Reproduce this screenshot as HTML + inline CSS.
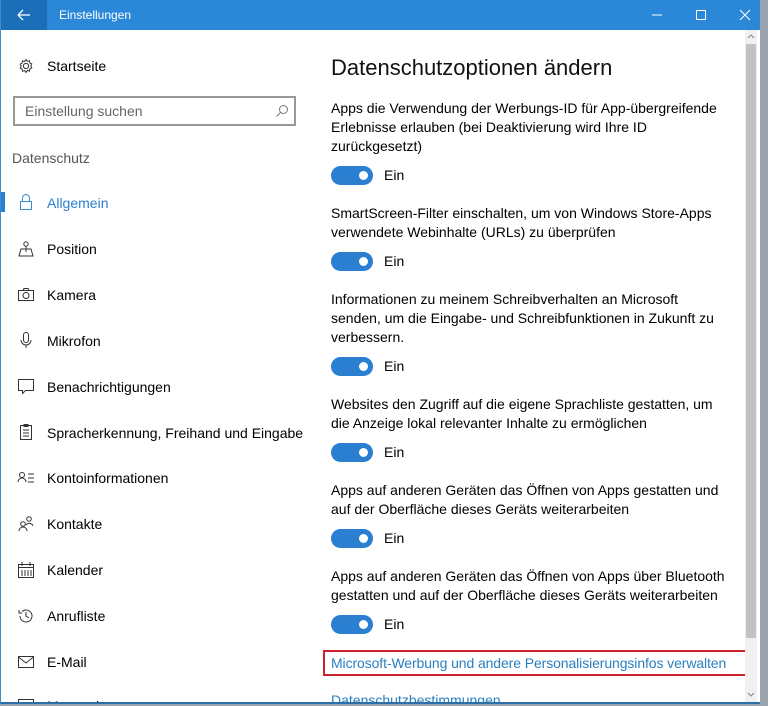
<!DOCTYPE html>
<html><head><meta charset="utf-8"><style>
*{margin:0;padding:0;box-sizing:border-box}
body{width:768px;height:706px;overflow:hidden;background:#9aa3ad;font-family:"Liberation Sans",sans-serif;position:relative}
#win{position:absolute;left:0;top:0;width:760px;height:704px;background:#fff;border-left:1px solid #3a8ed0;border-bottom:2px solid #2b6fa8;overflow:hidden}
#title{position:absolute;left:0;top:0;width:760px;height:30px;background:#2b88d8;color:#fff;font-size:12px}
#back{position:absolute;left:0;top:0;width:46px;height:30px;background:#1a6fb8}
.t{position:absolute;white-space:nowrap;font-size:14px;color:#000}
.p{position:absolute;left:330px;font-size:14px;color:#000;white-space:nowrap}
.tg{position:absolute;left:330px;width:42px;height:19px;border-radius:10px;background:#2a7fd0}
.tg::after{content:"";position:absolute;right:5px;top:5px;width:9px;height:9px;border-radius:50%;background:#fff}
.ein{position:absolute;left:383px;font-size:14px}
.ic{position:absolute;left:16px}
</style></head><body>
<div id="win">
<div id="title"><div id="back"><svg width="46" height="30"><path d="M17 15h12M17 15l5-5M17 15l5 5" stroke="#fff" stroke-width="1.3" fill="none"/></svg></div>
<span style="position:absolute;left:58px;top:8px">Einstellungen</span>
<svg style="position:absolute;left:640px;top:0" width="120" height="30"><path d="M11 15h10" stroke="#fff"/><rect x="55.5" y="10.5" width="9" height="9" stroke="#fff" fill="none"/><path d="M99 10l10 10M109 10l-10 10" stroke="#fff"/></svg>
</div>
<svg class="ic" style="top:57px" width="18" height="18" viewBox="0 0 18 18"><circle cx="9" cy="9" r="2.6" fill="none" stroke="#333"/><path d="M9 2.5l1.3 1.8 2.2-.6.3 2.2 2 1-1 2 1 2-2 1-.3 2.2-2.2-.6L9 15.5l-1.3-1.8-2.2.6-.3-2.2-2-1 1-2-1-2 2-1 .3-2.2 2.2.6z" fill="none" stroke="#333" stroke-width="1"/></svg>
<div class="t" style="left:46px;top:58px">Startseite</div>
<div style="position:absolute;left:12px;top:96px;width:283px;height:30px;border:2px solid #999"></div>
<div class="t" style="left:24px;top:103px;color:#666">Einstellung suchen</div>
<svg style="position:absolute;left:274px;top:104px" width="14" height="14"><circle cx="8.5" cy="5.5" r="4" fill="none" stroke="#777"/><path d="M5.5 8.5L1.5 12.5" stroke="#777"/></svg>
<div class="t" style="left:11px;top:150px;color:#555">Datenschutz</div>
<div style="position:absolute;left:0;top:192px;width:4px;height:20px;background:#2a7fd0"></div>
<svg class="ic" style="top:193px" width="18" height="18"><rect x="3.5" y="8.5" width="11" height="8" fill="none" stroke="#3a8ed0"/><path d="M5.5 8.5V5a3.5 3.5 0 0 1 7 0v3.5" fill="none" stroke="#3a8ed0"/></svg>
<div class="t" style="left:46px;top:195px;color:#2a7fd0">Allgemein</div>
<svg class="ic" style="top:240px" width="18" height="18"><circle cx="9" cy="4" r="2.2" fill="none" stroke="#333"/><path d="M9 6v6M4 9h10l2 7H2z" fill="none" stroke="#333"/></svg>
<div class="t" style="left:46px;top:241px">Position</div>
<svg class="ic" style="top:286px" width="18" height="18"><rect x="1.5" y="4.5" width="15" height="10" fill="none" stroke="#333"/><circle cx="9" cy="9.5" r="3" fill="none" stroke="#333"/><path d="M6 4.5l1-2h4l1 2" fill="none" stroke="#333"/></svg>
<div class="t" style="left:46px;top:287px">Kamera</div>
<svg class="ic" style="top:331px" width="18" height="18"><rect x="6.5" y="1.5" width="5" height="10" rx="2.5" fill="none" stroke="#333"/><path d="M4 9a5 5 0 0 0 10 0M9 14v3" fill="none" stroke="#333"/></svg>
<div class="t" style="left:46px;top:333px">Mikrofon</div>
<svg class="ic" style="top:377px" width="18" height="18"><path d="M1.5 2.5h15v11h-8l-3 3v-3h-4z" fill="none" stroke="#333"/></svg>
<div class="t" style="left:46px;top:379px">Benachrichtigungen</div>
<svg class="ic" style="top:423px" width="18" height="18"><rect x="3.5" y="2.5" width="11" height="14" fill="none" stroke="#333"/><path d="M7 1.5h4v2H7zM6 7h6M6 10h6M6 13h6" stroke="#333" fill="none"/></svg>
<div class="t" style="left:46px;top:425px">Spracherkennung, Freihand und Eingabe</div>
<svg class="ic" style="top:469px" width="18" height="18"><circle cx="5" cy="6" r="2.5" fill="none" stroke="#333"/><path d="M1 13a4 4 0 0 1 8 0M11 5h6M11 9h6M11 13h6" fill="none" stroke="#333"/></svg>
<div class="t" style="left:46px;top:470px">Kontoinformationen</div>
<svg class="ic" style="top:515px" width="18" height="18"><circle cx="6" cy="9" r="2.3" fill="none" stroke="#333"/><path d="M2 16a4 4 0 0 1 8 0" fill="none" stroke="#333"/><circle cx="12" cy="4" r="2.3" fill="none" stroke="#333"/><path d="M9 10a4 4 0 0 1 7 1" fill="none" stroke="#333"/></svg>
<div class="t" style="left:46px;top:516px">Kontakte</div>
<svg class="ic" style="top:561px" width="18" height="18"><rect x="1.5" y="3.5" width="15" height="13" fill="none" stroke="#333"/><path d="M1.5 6.5h15M5 1v4M13 1v4M5 9v6M8 9v6M11 9v6M14 9v6" stroke="#333"/></svg>
<div class="t" style="left:46px;top:562px">Kalender</div>
<svg class="ic" style="top:607px" width="18" height="18"><path d="M3 9a6 6 0 1 0 2-4.5M2 3v3h3M9 5v4l3 2" fill="none" stroke="#333"/></svg>
<div class="t" style="left:46px;top:608px">Anrufliste</div>
<svg class="ic" style="top:653px" width="18" height="18"><rect x="1.5" y="3.5" width="15" height="11" fill="none" stroke="#333"/><path d="M1.5 4l7.5 6 7.5-6" fill="none" stroke="#333"/></svg>
<div class="t" style="left:46px;top:654px">E-Mail</div>
<svg class="ic" style="top:698px" width="18" height="18"><rect x="1.5" y="1.5" width="15" height="11" fill="none" stroke="#333"/></svg>
<div class="t" style="left:46px;top:698px">Messaging</div>

<div class="t" style="left:330px;top:55px;font-size:22px;color:#111">Datenschutzoptionen ändern</div>
<div class="p" style="top:100px">Apps die Verwendung der Werbungs-ID für App-übergreifende</div>
<div class="p" style="top:119px">Erlebnisse erlauben (bei Deaktivierung wird Ihre ID</div>
<div class="p" style="top:138px">zurückgesetzt)</div>
<div class="tg" style="top:166px"></div><div class="ein" style="top:167px">Ein</div>
<div class="p" style="top:205px">SmartScreen-Filter einschalten, um von Windows Store-Apps</div>
<div class="p" style="top:224px">verwendete Webinhalte (URLs) zu überprüfen</div>
<div class="tg" style="top:252px"></div><div class="ein" style="top:253px">Ein</div>
<div class="p" style="top:291px">Informationen zu meinem Schreibverhalten an Microsoft</div>
<div class="p" style="top:310px">senden, um die Eingabe- und Schreibfunktionen in Zukunft zu</div>
<div class="p" style="top:329px">verbessern.</div>
<div class="tg" style="top:357px"></div><div class="ein" style="top:358px">Ein</div>
<div class="p" style="top:396px">Websites den Zugriff auf die eigene Sprachliste gestatten, um</div>
<div class="p" style="top:415px">die Anzeige lokal relevanter Inhalte zu ermöglichen</div>
<div class="tg" style="top:443px"></div><div class="ein" style="top:444px">Ein</div>
<div class="p" style="top:482px">Apps auf anderen Geräten das Öffnen von Apps gestatten und</div>
<div class="p" style="top:501px">auf der Oberfläche dieses Geräts weiterarbeiten</div>
<div class="tg" style="top:529px"></div><div class="ein" style="top:530px">Ein</div>
<div class="p" style="top:568px">Apps auf anderen Geräten das Öffnen von Apps über Bluetooth</div>
<div class="p" style="top:587px">gestatten und auf der Oberfläche dieses Geräts weiterarbeiten</div>
<div class="tg" style="top:615px"></div><div class="ein" style="top:616px">Ein</div>
<div style="position:absolute;left:322px;top:650px;width:428px;height:26px;border:2px solid #d02030"></div>
<div class="p" style="top:655px;color:#2a7fbf;letter-spacing:-0.1px">Microsoft-Werbung und andere Personalisierungsinfos verwalten</div>
<div class="p" style="top:692px;color:#2a7fbf">Datenschutzbestimmungen</div>

<div style="position:absolute;left:744px;top:30px;width:12px;height:674px;background:#f0f0f0"></div>
<div style="position:absolute;left:745px;top:44px;width:10px;height:594px;background:#c2c2c2"></div>
<svg style="position:absolute;left:744px;top:32px" width="12" height="10"><path d="M3 6l3-3 3 3" stroke="#888" fill="none"/></svg>
<svg style="position:absolute;left:744px;top:690px" width="12" height="10"><path d="M3 3l3 3 3-3" stroke="#888" fill="none"/></svg>
</div>
</body></html>
